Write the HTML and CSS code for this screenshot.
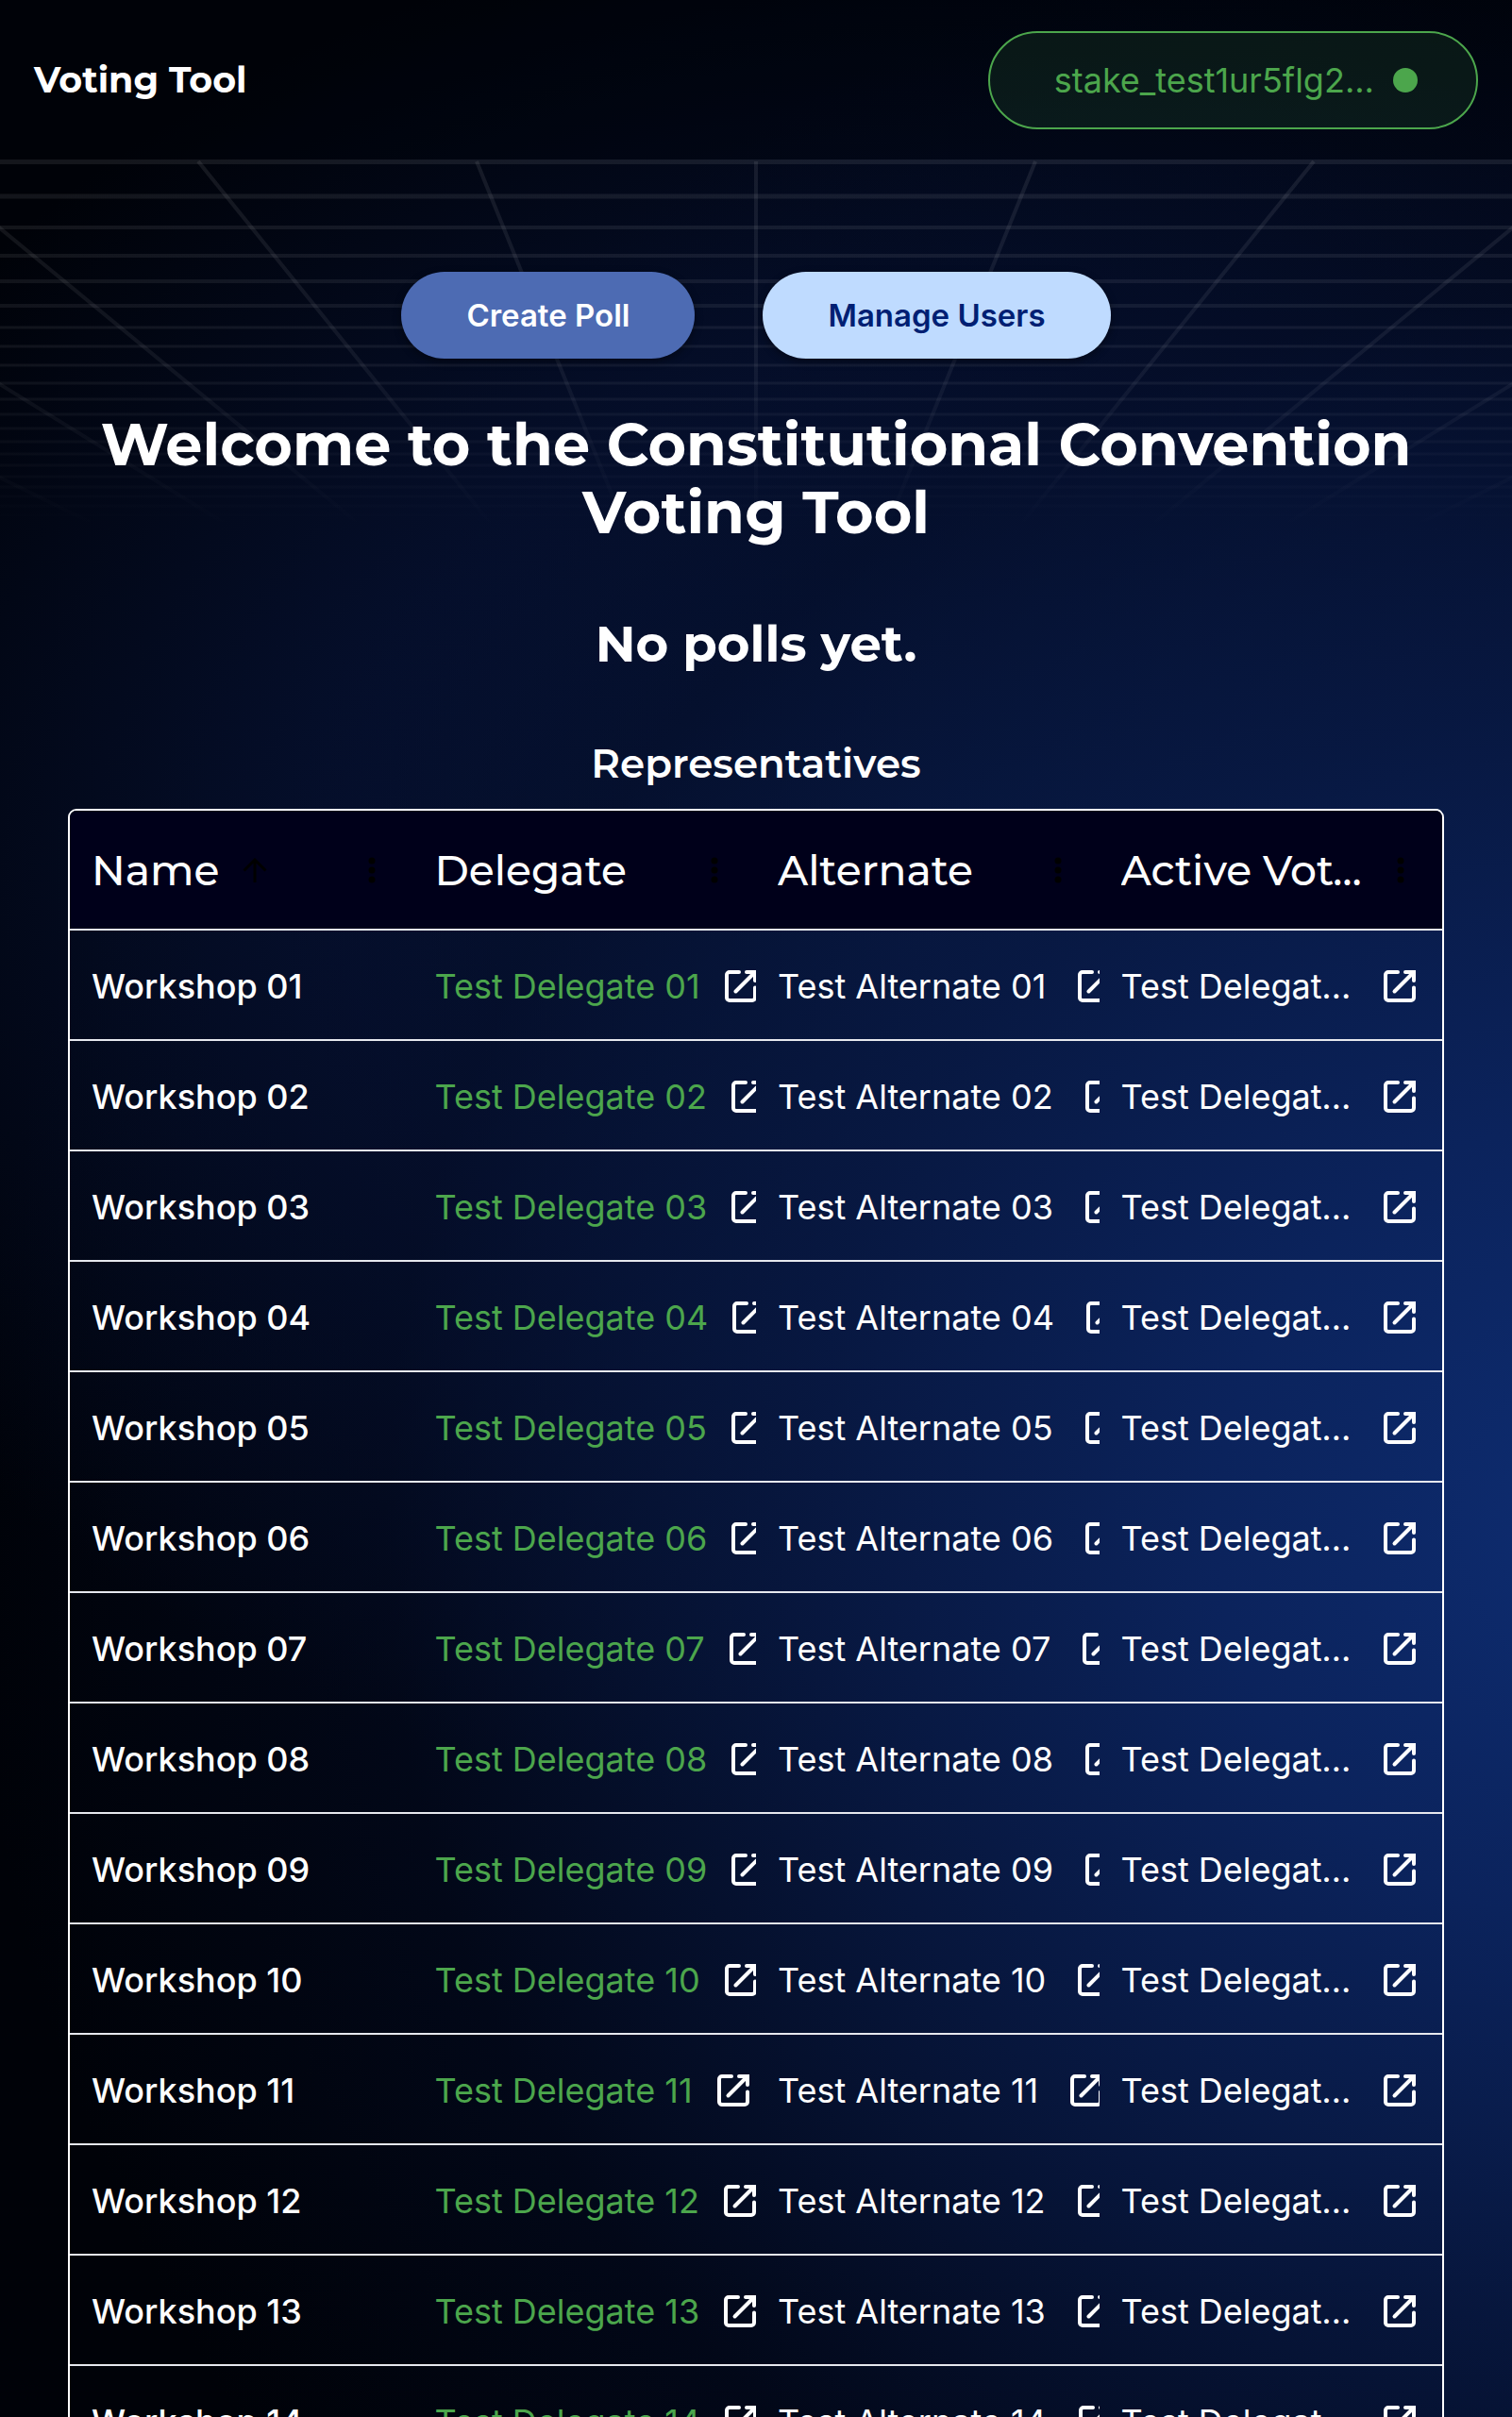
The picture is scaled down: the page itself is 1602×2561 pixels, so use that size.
FILE: index.html
```html
<!DOCTYPE html>
<html lang="en">
<head>
<meta charset="utf-8">
<meta name="viewport" content="width=device-width, initial-scale=1">
<title>Voting Tool</title>
<link rel="stylesheet" href="styles.css">
</head>
<body>
<svg class="sprite" aria-hidden="true">
  <symbol id="open" viewBox="0 0 34 34">
    <g fill="none" stroke="currentColor" stroke-width="4" stroke-linecap="round">
      <path d="M15 2H5a3 3 0 0 0-3 3v24a3 3 0 0 0 3 3h24a3 3 0 0 0 3-3V18.5"/>
      <path d="M23 2h9v9M31 3L11.5 22.5"/>
    </g>
  </symbol>
  <symbol id="sort" viewBox="0 0 26 26">
    <path d="M13 26V2M1.500 13.500L13 2l11.500 11.500" fill="none" stroke="currentColor" stroke-width="3"/>
  </symbol>
  <symbol id="more" viewBox="0 0 8 28">
    <g fill="currentColor"><circle cx="4" cy="4" r="3.500"/><circle cx="4" cy="14" r="3.500"/><circle cx="4" cy="24" r="3.500"/></g>
  </symbol>
</svg>

<div class="app">
  <header class="topbar">
    <a class="brand" href="#">Voting Tool</a>
    <button class="wallet" type="button"><span>stake_test1ur5flg2...</span><i class="dot"></i></button>
  </header>

  <main class="content">
    <svg class="grid" viewBox="0 0 1602 400" preserveAspectRatio="none" aria-hidden="true">
      <defs>
        <linearGradient id="fade" gradientUnits="userSpaceOnUse" x1="0" y1="0" x2="0" y2="390">
          <stop offset="0" stop-color="#fff" stop-opacity=".08"/>
          <stop offset=".55" stop-color="#fff" stop-opacity=".06"/>
          <stop offset="1" stop-color="#fff" stop-opacity="0"/>
        </linearGradient>
      </defs>
      <g fill="none" stroke="url(#fade)" stroke-width="3">
        <path stroke-width="5" d="M0 2.500H1602v.01M0 39H1602v.01"/>
        <path stroke-width="4" d="M0 72H1602v.01M0 102H1602v.01M0 129H1602v.01M0 155H1602v.01"/>
        <path d="M0 178H1602v.01M0 198H1602v.01M0 218H1602v.01M0 237H1602v.01M0 254H1602v.01M0 270H1602v.01M0 285H1602v.01M0 299H1602v.01M0 312H1602v.01M0 324H1602v.01M0 336H1602v.01M0 347H1602v.01M0 357H1602v.01M0 367H1602v.01M0 377H1602v.01"/>
        <path stroke-width="4" d="M801 2V391h.01M505 2L663 391M1097 2L939 391M210 2L524 391M1392 2L1078 391M-86 2L386 391M1688 2L1216 391M-382 2L247 391M1984 2L1355 391M-678 2L109 391M2280 2L1493 391"/>
      </g>
    </svg>

    <div class="actions">
      <button class="btn btn-primary" type="button">Create Poll</button>
      <button class="btn btn-light" type="button">Manage Users</button>
    </div>
    <h1>Welcome to the Constitutional Convention Voting Tool</h1>
    <h2>No polls yet.</h2>
    <h3 id="reps">Representatives</h3>

    <div class="table-frame">
      <table aria-labelledby="reps">
        <thead>
          <tr>
            <th scope="col"><div class="head"><span>Name</span><svg class="sort"><use href="#sort"/></svg><button type="button" aria-label="Name menu"><svg><use href="#more"/></svg></button></div></th>
            <th scope="col"><div class="head"><span>Delegate</span><button type="button" aria-label="Delegate menu"><svg><use href="#more"/></svg></button></div></th>
            <th scope="col"><div class="head"><span>Alternate</span><button type="button" aria-label="Alternate menu"><svg><use href="#more"/></svg></button></div></th>
            <th scope="col"><div class="head"><span>Active Voter</span><button type="button" aria-label="Active Voter menu"><svg><use href="#more"/></svg></button></div></th>
          </tr>
        </thead>
        <tbody id="rows"></tbody>
      </table>
    </div>
  </main>
</div>
<script src="rows.js"></script>
</body>
</html>
```
FILE: rows.js
```javascript
// One row per workshop; the delegate is the active voter in each.
const link = (name) =>
  `<a href="#" aria-label="Open ${name}"><svg><use href="#open"/></svg></a>`;

const cell = (kind, name) =>
  `<td class="${kind}"><div class="person"><span>${name}</span>${link(name)}</div></td>`;

document.getElementById("rows").innerHTML = Array.from({ length: 14 }, (_, i) => {
  const n = String(i + 1).padStart(2, "0");
  return `<tr><td class="workshop">Workshop ${n}</td>` +
    cell("delegate", `Test Delegate ${n}`) +
    cell("alternate", `Test Alternate ${n}`) +
    cell("voter", `Test Delegate ${n}`) + "</tr>";
}).join("");
```
FILE: styles.css
```css
* { box-sizing: border-box; }

body {
  margin: 0;
  background: #000;
  color: #fff;
  font-family: Inter, "Liberation Sans", sans-serif;
  font-size: 36px;
}

button { font: inherit; color: inherit; cursor: pointer; }
a { color: inherit; text-decoration: none; }
svg { display: block; }
.sprite { position: absolute; width: 0; height: 0; }

.app {
  height: 100vh;
  overflow-y: auto;
  scrollbar-width: none;
  background:
    radial-gradient(ellipse 110% 68% at 108% 63%, #0e2d72 0%, #0b235c 25%, rgba(8, 25, 68, .85) 50%, rgba(4, 13, 40, .5) 75%, rgba(0, 3, 12, 0) 100%),
    radial-gradient(ellipse 85% 40% at 65% 36%, #07183e 0%, #050f2c 50%, #000208 100%);
}

.topbar {
  display: flex;
  align-items: center;
  justify-content: space-between;
  padding: 33px 36px 32px;
  background: rgba(0, 2, 10, .3);
}

.brand { font: 700 38px/48px Montserrat, Inter, sans-serif; }

.wallet {
  display: flex;
  align-items: center;
  gap: 20px;
  height: 104px;
  padding: 0 62px 0 68px;
  border: 2px solid #4ca64c;
  border-radius: 52px;
  background: rgba(76, 166, 76, .12);
  color: #4ca64c;
}

.dot { width: 26px; height: 26px; border-radius: 50%; background: currentColor; }

.content { position: relative; padding: 119px 72px 72px; }

.grid {
  position: absolute;
  top: 0;
  left: 0;
  width: 100%;
  height: 400px;
}

.actions { position: relative; display: flex; justify-content: center; gap: 72px; }

.btn {
  height: 92px;
  padding: 0 69px;
  border: 0;
  border-radius: 46px;
  font-size: 33px;
  font-weight: 600;
  box-shadow: 0 3px 8px rgba(0, 0, 0, .4);
}
.btn-primary { background: #4d6bb3; }
.btn-light { background: #bfdbff; color: #001f73; }

h1, h2, h3 { position: relative; font-family: Montserrat, Inter, sans-serif; text-align: center; }
h1 { margin: 55px 0 0; font-size: 62px; font-weight: 700; line-height: 72px; }
h2 { margin: 71px 0 0; font-size: 53px; font-weight: 700; line-height: 64px; }
h3 { margin: 71px 0 24px; font-size: 42px; font-weight: 600; line-height: 48px; }

.table-frame { border: 2px solid #fff; border-radius: 9px; overflow: hidden; }

table { width: 100%; table-layout: fixed; border-collapse: separate; border-spacing: 0; }

th, td {
  height: 117px;
  padding: 0 0 0 23px;
  border-bottom: 2px solid #e6e8ee;
  text-align: left;
  overflow: hidden;
  white-space: nowrap;
}

th {
  height: 127px;
  padding-right: 23px;
  background: #00001a;
  font: 500 44px/56px Montserrat, Inter, sans-serif;
}

.head { display: flex; align-items: center; }
.head span { overflow: hidden; text-overflow: ellipsis; }
.head svg { flex: none; color: #000; }
.sort { width: 26px; height: 26px; margin-left: 25px; }
.head button {
  flex: none;
  display: flex;
  justify-content: center;
  width: 42px;
  margin-left: auto;
  padding: 0;
  border: 0;
  background: none;
}
.head button svg { width: 8px; height: 28px; }
.head span:has(+ button) { margin-right: 14px; }

td { padding-top: 2px; }
.workshop { font-weight: 500; }
.person { display: flex; align-items: center; gap: 20px; }
.person a { flex: none; width: 46px; padding: 6px; }
.person svg { width: 34px; height: 34px; }
.delegate span { color: #4ca64c; }
.alternate .person { gap: 28px; }
.voter { padding-right: 22px; }
.voter span { flex: 1; overflow: hidden; text-overflow: ellipsis; }
```
